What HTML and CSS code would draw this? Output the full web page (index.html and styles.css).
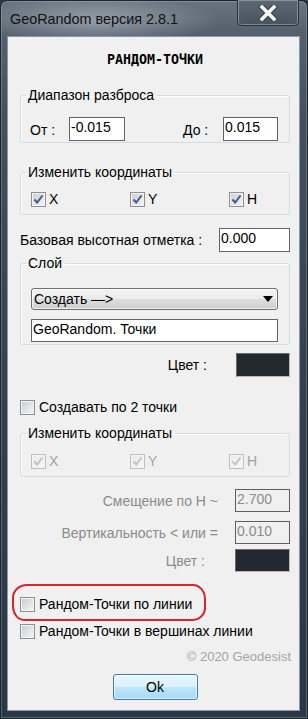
FILE: index.html
```html
<html>
<head>
<meta charset="utf-8">
<link rel="stylesheet" href="styles.css">
</head>
<body>

<div class="window">
  <div class="titlebar">
    <span class="caption">GeoRandom версия 2.8.1</span>
    <span class="close-btn">
      <svg width="20" height="16" viewBox="0 0 20 16">
        <path d="M4 2 L16 14 M16 2 L4 14" stroke="#3b4651" stroke-width="6" stroke-linecap="square"/>
        <path d="M4 2 L16 14 M16 2 L4 14" stroke="#f4f6f8" stroke-width="3.6" stroke-linecap="square"/>
      </svg>
    </span>
  </div>

  <div class="client">
    <div class="heading">РАНДОМ-ТОЧКИ</div>

    <fieldset class="group range">
      <legend>Диапазон разброса</legend>
      <div class="range-row">
        <span class="lbl lbl-from">От :</span><span class="field f-from">-0.015</span>
        <span class="lbl lbl-to">До :</span><span class="field f-to">0.015</span>
      </div>
    </fieldset>

    <fieldset class="group coords">
      <legend>Изменить координаты</legend>
      <div class="check-grid">
        <span class="check"><span class="box on"><svg width="13" height="13" viewBox="0 0 13 13"><path d="M2.5 6.5 L5.2 9.5 L10.5 2.5" fill="none" stroke="#3e5b94" stroke-width="2"/></svg></span>X</span>
        <span class="check"><span class="box on"><svg width="13" height="13" viewBox="0 0 13 13"><path d="M2.5 6.5 L5.2 9.5 L10.5 2.5" fill="none" stroke="#3e5b94" stroke-width="2"/></svg></span>Y</span>
        <span class="check"><span class="box on"><svg width="13" height="13" viewBox="0 0 13 13"><path d="M2.5 6.5 L5.2 9.5 L10.5 2.5" fill="none" stroke="#3e5b94" stroke-width="2"/></svg></span>H</span>
      </div>
    </fieldset>

    <div class="base-row">
      <span>Базовая высотная отметка :</span>
      <span class="field f-base">0.000</span>
    </div>

    <fieldset class="group layer">
      <legend>Слой</legend>
      <div class="combo"><span>Создать —&gt;</span><i class="arrow"></i></div>
      <div class="field f-layer">GeoRandom. Точки</div>
    </fieldset>

    <div class="color-row">
      <span class="color-lbl">Цвет :</span><span class="swatch"></span>
    </div>

    <div class="check single pairs"><span class="box"></span>Создавать по 2 точки</div>

    <fieldset class="group coords disabled">
      <legend>Изменить координаты</legend>
      <div class="check-grid">
        <span class="check"><span class="box on"><svg width="13" height="13" viewBox="0 0 13 13"><path d="M2.5 6.5 L5.2 9.5 L10.5 2.5" fill="none" stroke="#c2c2c2" stroke-width="2"/></svg></span>X</span>
        <span class="check"><span class="box on"><svg width="13" height="13" viewBox="0 0 13 13"><path d="M2.5 6.5 L5.2 9.5 L10.5 2.5" fill="none" stroke="#c2c2c2" stroke-width="2"/></svg></span>Y</span>
        <span class="check"><span class="box on"><svg width="13" height="13" viewBox="0 0 13 13"><path d="M2.5 6.5 L5.2 9.5 L10.5 2.5" fill="none" stroke="#c2c2c2" stroke-width="2"/></svg></span>H</span>
      </div>
    </fieldset>

    <div class="param-row shift disabled">
      <span class="param-lbl">Смещение по H ~</span><span class="field f-param">2.700</span>
    </div>
    <div class="param-row vert disabled">
      <span class="param-lbl">Вертикальность &lt; или =</span><span class="field f-param">0.010</span>
    </div>
    <div class="color-row color-off disabled">
      <span class="color-lbl">Цвет :</span><span class="swatch"></span>
    </div>

    <div class="check single marked"><span class="box"></span>Рандом-Точки по линии</div>
    <div class="check single vertices"><span class="box"></span>Рандом-Точки в вершинах линии</div>

    <div class="copyright">© 2020 Geodesist</div>
    <div class="ok-row"><span class="btn-ok">Ok</span></div>
  </div>
</div>

</body>
</html>
```

FILE: styles.css
```css
* { box-sizing: border-box; }

html, body { margin: 0; padding: 0; }

body {
 width: 308px;
 height: 719px;
 overflow: hidden;
 background: #2c3a48;
 color: #000;
 font-family: "Liberation Sans", Arial, sans-serif;
 font-size: 14px;
 line-height: 16px;
}

/* window frame */
.window {
 width: 308px;
 height: 719px;
 display: flex;
 flex-direction: column;
 padding: 0 8px 8px 7px;
 border: 1px solid #1b2530;
 border-radius: 7px 7px 0 0;
 background:
  radial-gradient(ellipse 125px 24px at 95px 19px, rgba(205, 213, 220, .5), rgba(205, 213, 220, 0)),
  linear-gradient(to bottom, #68747f 0, #55616d 30px, #44505c 120px, #33404d 400px, #2a3745 100%);
 box-shadow: inset 0 0 0 1px rgba(190, 200, 210, .3);
}

.titlebar {
 height: 36px;
 flex: none;
 display: flex;
 justify-content: space-between;
 align-items: flex-start;
}

.caption {
 margin: 10px 0 0 2px;
 font-size: 14.4px;
 color: #111;
}

.close-btn {
 width: 62px;
 height: 26px;
 margin-top: -1px;
 display: flex;
 align-items: center;
 justify-content: center;
 border: 1px solid #27313b;
 border-top: none;
 border-radius: 0 0 5px 5px;
 background: linear-gradient(to bottom, #5c6873, #48535f);
 box-shadow: inset 0 0 0 1px rgba(200, 210, 218, .4);
}

.client {
 flex: 1;
 background: #f0f0f0;
 padding: 0 9px 0 12px;
 box-shadow: 0 0 0 1px #8a98a6;
}

.heading {
 margin-top: 15px;
 text-align: center;
 font-family: "DejaVu Sans Mono", monospace;
 font-weight: bold;
 font-size: 13.3px;
 line-height: 16px;
}

/* group boxes */
.group {
 margin: 0;
 padding: 0;
 border: 1px solid #d5dbe0;
 border-radius: 3px;
 box-shadow: inset 1px 1px 0 #fff;
 min-width: 0;
}

.group legend {
 margin-left: 5px;
 padding: 0 3px 0 2px;
 line-height: 16px;
}

.range { margin-top: 19px; padding: 14px 0 1px; }
.coords { margin-top: 21px; padding: 11px 0 7px; }
.layer { margin-top: 3px; padding: 17px 0 2px; }
.coords.disabled { margin-top: 10px; padding-top: 12px; }

.range-row {
 display: flex;
 align-items: center;
 height: 24px;
}

.lbl { display: inline-block; padding-top: 2px; }
.lbl-from { margin-left: 9px; width: 39px; }
.lbl-to { margin-left: 58px; width: 40px; }

.field {
 display: block;
 border: 1px solid #646464;
 background: #fff;
 padding: 1px 2px 0 1px;
 line-height: 16px;
 white-space: nowrap;
 overflow: hidden;
}

.f-from { width: 56px; height: 24px; }
.f-to { width: 55px; height: 24px; }
.f-base { width: 71px; height: 24px; }
.f-layer { width: 247px; height: 23px; margin: 9px 0 0 10px; }
.f-param { width: 55px; height: 23px; }

/* checkboxes */
.check-grid {
 display: grid;
 grid-template-columns: 99px 99px 1fr;
 padding-left: 10px;
}

.check {
 display: flex;
 align-items: center;
 gap: 3px;
 height: 16px;
}

.box {
 width: 15px;
 height: 15px;
 flex: none;
 display: flex;
 align-items: center;
 justify-content: center;
 border: 1px solid #8e8f8f;
 background: linear-gradient(135deg, #c9ccd2, #f6f6f6);
 box-shadow: inset 0 0 0 1px #f4f4f4;
}

.disabled .check { color: #a3a3a3; }
.disabled .box {
 border-color: #c0c0c0;
 background: linear-gradient(135deg, #e9e9e9, #f8f8f8);
}
.disabled legend { color: #000; }

.single { gap: 4px; }
.pairs { margin-top: 22px; }
.marked { margin-top: 24px; position: relative; }
.vertices { margin-top: 11px; }

.marked::after {
 content: "";
 position: absolute;
 left: -8px;
 top: -12px;
 width: 190px;
 height: 33px;
 border: 2px solid #d9262d;
 border-radius: 15px 13px 14px 12px / 14px 15px 13px 15px;
}

/* rows */
.base-row {
 margin-top: 13px;
 height: 24px;
 display: flex;
 justify-content: space-between;
 align-items: center;
}

.combo {
 width: 247px;
 height: 22px;
 margin-left: 10px;
 display: flex;
 align-items: center;
 justify-content: space-between;
 padding: 0 4px 0 2px;
 border: 1px solid #707070;
 border-radius: 3px;
 background: linear-gradient(to bottom, #f2f2f2 0, #ebebeb 50%, #dddddd 51%, #cfcfcf 100%);
 box-shadow: inset 0 0 0 1px rgba(255, 255, 255, .7);
}

.arrow {
 width: 0;
 height: 0;
 border-left: 5px solid transparent;
 border-right: 5px solid transparent;
 border-top: 6px solid #000;
}

.color-row {
 margin-top: 8px;
 display: flex;
 justify-content: flex-end;
 align-items: center;
}

.color-lbl { margin-right: 29px; }

.swatch {
 width: 54px;
 height: 24px;
 background: #23282f;
 border: 1px solid;
 border-color: #6a6a6a #b9b9b9 #b9b9b9 #6a6a6a;
}

.color-off { margin-top: 5px; }
.color-off .color-lbl { margin-right: 30px; }
.color-off .swatch { width: 55px; height: 23px; }

.param-row {
 display: flex;
 justify-content: flex-end;
 align-items: center;
}

.param-lbl { margin-right: 17px; }
.shift { margin-top: 12px; }
.vert { margin-top: 9px; }

.disabled .param-lbl,
.disabled .color-lbl { color: #8b8b8b; }

.disabled .field {
 background: #f0f0f0;
 color: #8b8b8b;
 border-color: #5f5f5f;
}

.copyright {
 margin: 10px -1px 0 0;
 text-align: right;
 font-size: 13px;
 color: #a4a4a4;
}

.ok-row {
 margin-top: 9px;
 display: flex;
 justify-content: center;
}

.btn-ok {
 width: 85px;
 height: 26px;
 display: flex;
 align-items: center;
 justify-content: center;
 border: 1px solid #3c7fb1;
 border-radius: 3px;
 background: linear-gradient(to bottom, #eaf6fd 0, #d9f0fc 50%, #bee6fd 51%, #a7d9f5 100%);
 box-shadow: inset 0 0 0 1px rgba(255, 255, 255, .6);
}
```
